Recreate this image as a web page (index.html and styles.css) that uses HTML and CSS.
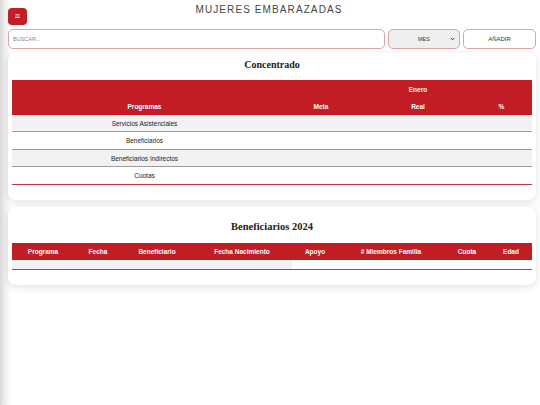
FILE: index.html
```html
<!DOCTYPE html>
<html>
<head>
    <title>Mujeres Embarazadas</title>
    <link rel="stylesheet" href="styles.css">
</head>
<body>
    <div class="top-bar">
        <button class="menu-button">&#8801;</button>
        <div class="page-title">MUJERES EMBARAZADAS</div>
        <div></div>
    </div>

    <div class="search-row">
        <input class="search-input" type="text" placeholder="BUSCAR...">
        <div class="select-wrap">
            <select class="month-select">
                <option>MES</option>
            </select>
            <svg class="select-arrow" width="5" height="4" viewBox="0 0 10 8">
                <path d="M1.5 2 L5 5.5 L8.5 2" fill="none" stroke="#333" stroke-width="2"/>
            </svg>
        </div>
        <button class="add-button">AÑADIR</button>
    </div>

    <div class="card card-summary">
        <h2 class="card-title">Concentrado</h2>
        <table class="data-table summary-table">
            <thead>
                <tr class="head-top">
                    <th class="col-programas"></th>
                    <th class="col-meta"></th>
                    <th class="col-real">Enero</th>
                    <th class="col-pct"></th>
                </tr>
                <tr>
                    <th>Programas</th>
                    <th>Meta</th>
                    <th>Real</th>
                    <th>%</th>
                </tr>
            </thead>
            <tbody>
                <tr class="shaded"><td>Servicios Asistenciales</td><td></td><td></td><td></td></tr>
                <tr class="tall"><td>Beneficiarios</td><td></td><td></td><td></td></tr>
                <tr class="shaded"><td>Beneficiarios Indirectos</td><td></td><td></td><td></td></tr>
                <tr class="tall last"><td>Cuotas</td><td></td><td></td><td></td></tr>
            </tbody>
        </table>
    </div>

    <div class="card card-list">
        <h2 class="card-title">Beneficiarios 2024</h2>
        <table class="data-table list-table">
            <thead>
                <tr>
                    <th class="w-programa">Programa</th>
                    <th class="w-fecha">Fecha</th>
                    <th class="w-beneficiario">Beneficiario</th>
                    <th class="w-nacimiento">Fecha Nacimiento</th>
                    <th class="w-apoyo">Apoyo</th>
                    <th class="w-miembros"># Miembros Familia</th>
                    <th class="w-cuota">Cuota</th>
                    <th class="w-edad">Edad</th>
                </tr>
            </thead>
            <tbody>
                <tr class="empty-row last">
                    <td class="filled"></td>
                    <td class="filled"></td>
                    <td class="filled"></td>
                    <td class="filled"></td>
                    <td></td><td></td><td></td><td></td>
                </tr>
            </tbody>
        </table>
    </div>
</body>
</html>
```

FILE: styles.css
```css
html {
    min-height: 100%;
}
body {
    font-family: "Liberation Sans", Arial, sans-serif;
    margin: 0;
    padding: 0 4px 0 8px;
    min-height: 405px;
    box-sizing: border-box;
    background: linear-gradient(90deg, #d9d9d9 0, #ececec 4px, #ffffff 11px);
    color: #222;
}
.top-bar {
    display: grid;
    grid-template-columns: 1fr auto 1fr;
    align-items: start;
}
.menu-button {
    margin-top: 8px;
    width: 19px;
    height: 17px;
    border: none;
    border-radius: 4px;
    background-color: #c41e25;
    color: #ffffff;
    font-size: 9px;
    line-height: 17px;
    padding: 0;
    cursor: pointer;
}
.page-title {
    margin-top: 4px;
    font-size: 10px;
    letter-spacing: 1.1px;
    color: #444;
    margin-left: -6px;
}
.search-row {
    display: flex;
    gap: 3px;
    margin-top: 4px;
}
.search-input,
.month-select,
.add-button {
    height: 20px;
    box-sizing: border-box;
    border: 1px solid #d9a4a4;
    border-radius: 5px;
    font-family: "Liberation Sans", Arial, sans-serif;
    font-size: 5.5px;
    color: #333;
}
.search-input {
    flex: 1;
    padding: 0 4px;
    background: #fff;
}
.search-input::placeholder {
    color: #888;
}
.select-wrap {
    position: relative;
    width: 72px;
    display: flex;
}
.month-select {
    width: 100%;
    appearance: none;
    -webkit-appearance: none;
    background-color: #efefef;
    text-align: center;
    text-align-last: center;
    padding: 0;
}
/* small chevron laid over the select */
.select-arrow {
    position: absolute;
    right: 5px;
    top: 8px;
}
.add-button {
    width: 73px;
    background-color: #ffffff;
    font-size: 6px;
}
.card {
    background-color: #ffffff;
    border-radius: 8px;
    box-shadow: 0 2px 9px rgba(0, 0, 0, 0.12);
    padding: 0 4px 15px;
}
.card-summary {
    margin-top: 4px;
}
.card-list {
    margin-top: 7px;
}
.card-title {
    font-family: "Liberation Serif", "Times New Roman", serif;
    font-weight: bold;
    font-size: 10px;
    text-align: center;
    margin: 0;
}
.card-summary .card-title {
    padding: 6px 0 10px;
}
.card-list .card-title {
    font-size: 10.5px;
    padding: 14px 0 11px;
}
.data-table {
    width: 100%;
    border-collapse: collapse;
    table-layout: fixed;
    font-size: 6.5px;
}
.data-table th {
    background-color: #c21d24;
    color: #ffffff;
    font-weight: bold;
    text-align: center;
    height: 17px;
    padding: 0;
}
.data-table td {
    text-align: center;
    height: 16px;
    padding: 0;
    color: #222;
    border-bottom: 1px solid #9d9d9d;
}
.data-table tr.tall td {
    height: 17px;
}
.data-table tr.last td {
    border-bottom: 1px solid #c8343a;
}
.summary-table .head-top th {
    height: 18px;
}
.col-programas { width: 265px; }
.col-meta { width: 88px; }
.col-real { width: 106px; }
.col-pct { width: 61px; }
.w-programa { width: 62px; }
.w-fecha { width: 48px; }
.w-beneficiario { width: 70px; }
.w-nacimiento { width: 100px; }
.w-apoyo { width: 46px; }
.w-miembros { width: 106px; }
.w-cuota { width: 46px; }
.w-edad { width: 42px; }
.shaded td {
    background-color: #f2f2f2;
}
.list-table .empty-row td {
    height: 9px;
}
.list-table .empty-row td.filled {
    background-color: #f2f2f2;
}
```
